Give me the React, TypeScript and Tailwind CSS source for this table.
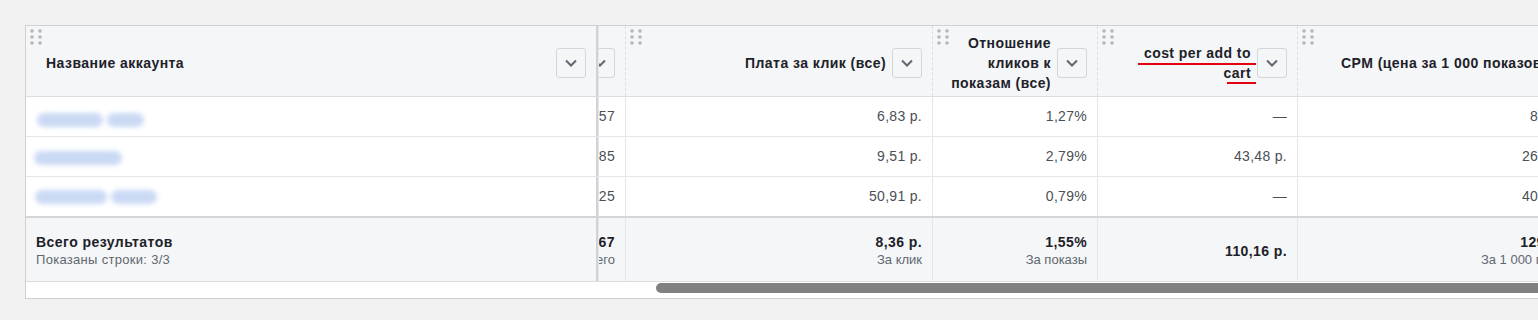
import React from 'react';

type Column = {
  width: string;
  title: React.ReactNode;
  dots: boolean;
  values: string[];
  total: string;
  sub?: string;
  clip?: boolean;
};

const Dots = () => (
  <svg width="12" height="16" viewBox="0 0 12 16" fill="#b4b7bc" className="absolute left-[4px] top-[3px]">
    <circle cx="2" cy="2" r="1.8" />
    <circle cx="10" cy="2" r="1.8" />
    <circle cx="2" cy="8" r="1.8" />
    <circle cx="10" cy="8" r="1.8" />
    <circle cx="2" cy="14" r="1.8" />
    <circle cx="10" cy="14" r="1.8" />
  </svg>
);

const SortButton = () => (
  <span className="flex h-[30px] w-[30px] shrink-0 items-center justify-center rounded-[3px] border border-[#d3d6db] bg-[#f5f6f7]">
    <svg width="12" height="8" viewBox="0 0 12 8" fill="none" stroke="#606770" strokeWidth="2">
      <path d="M1 1.5l5 5 5-5" />
    </svg>
  </span>
);

const columns: Column[] = [
  {
    width: 'w-[28px]',
    title: null,
    dots: false,
    values: ['1 457', '3 285', '125'],
    total: '4 867',
    sub: 'Всего',
    clip: true,
  },
  {
    width: 'w-[307px]',
    title: 'Плата за клик (все)',
    dots: true,
    values: ['6,83 р.', '9,51 р.', '50,91 р.'],
    total: '8,36 р.',
    sub: 'За клик',
  },
  {
    width: 'w-[165px]',
    title: (
      <>
        Отношение
        <br />
        кликов к
        <br />
        показам (все)
      </>
    ),
    dots: true,
    values: ['1,27%', '2,79%', '0,79%'],
    total: '1,55%',
    sub: 'За показы',
  },
  {
    width: 'w-[200px]',
    title: (
      <>
        cost per add to
        <br />
        cart
      </>
    ),
    dots: true,
    values: ['—', '43,48 р.', '—'],
    total: '110,16 р.',
  },
  {
    width: 'w-[296px]',
    title: 'CPM (цена за 1 000 показов)',
    dots: true,
    values: ['84,51 р.', '262,39 р.', '401,57 р.'],
    total: '129,70 р.',
    sub: 'За 1 000 показов',
  },
];

// blurred account names, one list of blob widths per row
const accounts = [
  { blobs: ['w-[66px]', 'w-[37px]'], pad: 'pl-[11px] pt-[6px]' },
  { blobs: ['w-[88px]'], pad: 'pl-[8px] pt-[3px]' },
  { blobs: ['w-[72px]', 'w-[46px]'], pad: 'pl-[9px] pt-[0px]' },
];

const frozen = 'relative z-10 w-[572px] shrink-0 border-r-2 border-[#cfd2d7] shadow-[1px_0_0_#e6e8eb]';

export default function App() {
  return (
    <div className="h-[320px] w-[1538px] overflow-hidden bg-[#f2f2f2] pl-[25px] pt-[25px] font-['Liberation_Sans',Arial,sans-serif]">
      <div className="w-[1572px] border border-[#cfd0d2] bg-white">
        {/* header */}
        <div className="flex h-[71px] border-b border-[#dadde1] bg-[#f5f6f7] text-[14px] font-bold leading-[20px] tracking-[0.45px] text-[#1d2129]">
          <div className={`${frozen} flex items-center justify-between pl-[20px] pr-[10px] pt-[3px]`}>
            <Dots />
            <span>Название аккаунта</span>
            <SortButton />
          </div>
          {columns.map((c, i) => (
            <div
              key={i}
              className={`${c.width} relative flex shrink-0 items-center justify-end gap-[6px] overflow-hidden border-r border-dashed border-[#dadde1] pr-[10px] pt-[3px] text-right`}
            >
              {c.dots && <Dots />}
              {c.title && <span className="whitespace-nowrap">{c.title}</span>}
              <SortButton />
              {i === 3 && (
                <>
                  <span className="absolute left-[40px] top-[37px] h-[2px] w-[118px] bg-[#e3000f]" />
                  <span className="absolute left-[129px] top-[56px] h-[2px] w-[29px] bg-[#e3000f]" />
                </>
              )}
            </div>
          ))}
        </div>

        {/* body rows */}
        {accounts.map((a, r) => (
          <div
            key={r}
            className={`flex ${r < 2 ? 'h-[40px] border-b border-[#e4e6e9]' : 'h-[39px]'} text-[14px] tracking-[0.3px] text-[#4b4f56]`}
          >
            <div className={`${frozen} flex items-center gap-[4px] ${a.pad}`}>
              {a.blobs.map((w, k) => (
                <span key={k} className={`${w} h-[14px] rounded-full bg-[#cad9f4] blur-[2.5px]`} />
              ))}
            </div>
            {columns.map((c, i) => (
              <div
                key={i}
                className={`${c.width} flex shrink-0 items-center justify-end overflow-hidden whitespace-nowrap border-r border-[#e4e6e9] pr-[10px]`}
              >
                {c.values[r]}
              </div>
            ))}
          </div>
        ))}

        {/* totals */}
        <div className="flex h-[66px] border-b border-t-2 border-b-[#dadde1] border-t-[#d3d5d8] bg-[#f5f6f7] leading-[18px]">
          <div className={`${frozen} flex flex-col justify-center pl-[10px] pt-[2px]`}>
            <span className="text-[14px] font-bold tracking-[0.45px] text-[#1d2129]">Всего результатов</span>
            <span className="text-[13px] tracking-[0.3px] text-[#606770]">Показаны строки: 3/3</span>
          </div>
          {columns.map((c, i) => (
            <div
              key={i}
              className={`${c.width} flex shrink-0 flex-col items-end justify-center overflow-hidden whitespace-nowrap border-r border-[#e4e6e9] pr-[10px] pt-[2px]`}
            >
              <span className="text-[14px] font-bold tracking-[0.4px] text-[#1d2129]">{c.total}</span>
              {c.sub && <span className="text-[13px] text-[#606770]">{c.sub}</span>}
            </div>
          ))}
        </div>

        {/* horizontal scrollbar */}
        <div className="h-[16px] pl-[630px] pt-[1px]">
          <div className="h-[10px] w-[1000px] rounded-full bg-[#808080]" />
        </div>
      </div>
    </div>
  );
}
